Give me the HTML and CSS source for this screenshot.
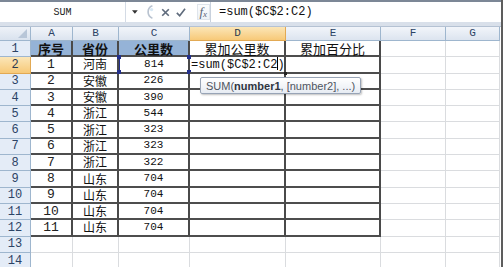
FILE: index.html
```html
<!DOCTYPE html>
<html lang="zh-CN">
<head>
    <meta charset="UTF-8">
    <title>Excel SUM</title>
    <link rel="stylesheet" href="styles.css">
</head>
<body>
    <div class="window">
        <div class="formula-bar">
            <div class="name-box">SUM</div>
            <div class="bar-tools">
                <svg class="drop" width="7" height="4" viewBox="0 0 7 4"><path d="M0 0h7L3.5 4z" fill="#333"/></svg>
                <svg class="knob" width="12" height="18" viewBox="0 0 12 18"><path d="M9 1.5A8 8 0 0 0 9 16.5" fill="none" stroke="#b9c3d0" stroke-width="2"/><circle cx="8" cy="6" r="2" fill="#d8e8f4"/></svg>
                <svg class="tool" width="11" height="11" viewBox="0 0 11 11"><path d="M1.5 1.5l8 8M9.5 1.5l-8 8" stroke="#5f6b7c" stroke-width="2"/></svg>
                <svg class="tool" width="12" height="11" viewBox="0 0 12 11"><path d="M1 6l3.5 3.5L11 1" fill="none" stroke="#5f6b7c" stroke-width="2"/></svg>
                <span class="fx"><i>f</i><i class="x">x</i></span>
            </div>
            <div class="formula-input">=sum($C$2:C2)</div>
        </div>
        <div class="band"></div>
        <div class="sheet" id="sheet"></div>
        <div class="tooltip">SUM(<b>number1</b>, [number2], ...)</div>
    </div>

    <script>
        const cols = ['A', 'B', 'C', 'D', 'E', 'F', 'G'];
        const titles = ['序号', '省份', '公里数', '累加公里数', '累加百分比'];
        const rows = [
            [1, '河南', 814], [2, '安徽', 226], [3, '安徽', 390], [4, '浙江', 544],
            [5, '浙江', 323], [6, '浙江', 323], [7, '浙江', 322], [8, '山东', 704],
            [9, '山东', 704], [10, '山东', 704], [11, '山东', 704]
        ];

        function cell(cls, html) {
            return `<div class="${cls}">${html || ''}</div>`;
        }

        let html = cell('corner', '<span class="tri"></span>');
        cols.forEach(c => {
            html += cell('col-head' + (c === 'D' ? ' active' : ''), c);
        });

        for (let r = 1; r <= 14; r++) {
            html += cell('row-head' + (r === 2 ? ' active' : ''), r);
            cols.forEach((c, i) => {
                const inBox = r <= 12 && i < 5;
                let cls = 'cell' + (inBox ? ' box' : '');
                let text = '';
                if (r === 1 && i < 5) {
                    text = titles[i];
                    cls += i < 3 ? ' title' : ' cjk';
                } else if (r > 1 && r <= 12 && i < 3) {
                    const v = rows[r - 2][i];
                    text = v;
                    cls += i === 0 ? ' num' : i === 1 ? ' cjk small' : ' km';
                }
                if (r === 2 && c === 'C') {
                    cls += ' ref';
                    text += '<span class="mark tl"></span><span class="mark tr"></span><span class="mark bl"></span><span class="mark br"></span>';
                }
                if (r === 2 && c === 'D') {
                    cls += ' editing';
                    text = '<span class="edit-text">=sum($C$2:C2<span class="caret"></span>)</span><span class="handle"></span>';
                }
                html += cell(cls, text);
            });
        }

        document.getElementById('sheet').innerHTML = html;
    </script>
</body>
</html>
```

FILE: styles.css
```css
* {
    box-sizing: border-box;
    margin: 0;
    padding: 0;
}

body {
    width: 503px;
    height: 267px;
    overflow: hidden;
    background: #fff;
    font-family: "Liberation Mono", "Noto Sans CJK SC", monospace;
}

.window {
    position: relative;
    width: 503px;
    height: 267px;
    overflow: hidden;
    border-right: 2px solid #5d5d5d;
}

/* formula bar */
.formula-bar {
    height: 22px;
    display: flex;
    border-top: 2px solid #7c8796;
    background: #fff;
}

.name-box {
    width: 126px;
    display: flex;
    align-items: center;
    justify-content: center;
    font-size: 10px;
    color: #222;
    border-right: 1px solid #d4dbe5;
}

.bar-tools {
    width: 84px;
    display: flex;
    align-items: center;
    padding-left: 6px;
    gap: 5px;
}

.drop {
    margin-right: 2px;
}

.tool {
    margin-left: 1px;
}

.fx {
    margin-left: 6px;
    height: 16px;
    width: 16px;
    display: flex;
    align-items: center;
    justify-content: center;
    border: 1px solid #dfe5ec;
    background: linear-gradient(#fbfcfd, #eef2f6);
    font-family: "Liberation Serif", serif;
    font-size: 13px;
    color: #5a6575;
}

.fx .x {
    font-size: 9px;
    margin-top: 4px;
}

.formula-input {
    flex: 1;
    display: flex;
    align-items: center;
    padding-left: 8px;
    border-left: 1px solid #c8d1dd;
    font-size: 12px;
    color: #111;
}

.band {
    height: 5px;
    background: #d9e0ea;
    border-bottom: 1px solid #b5c2d3;
}

/* sheet grid */
.sheet {
    width: 500px;
    display: grid;
    grid-template-columns: 31px 42px 46px 71px 96px 95px 65px 54px;
    grid-template-rows: 14px;
    grid-auto-rows: 16.3px;
}

.corner,
.col-head,
.row-head {
    display: flex;
    align-items: center;
    justify-content: center;
    line-height: 1;
    color: #2c4365;
    font-size: 11px;
    border-right: 1px solid #9eb6ce;
    border-bottom: 1px solid #9eb6ce;
}

.corner {
    position: relative;
    background: linear-gradient(#eef2f8, #d9e2ee);
}

.corner .tri {
    position: absolute;
    right: 3px;
    bottom: 2px;
    border-left: 9px solid transparent;
    border-bottom: 9px solid #b8c6d8;
}

.col-head {
    background: linear-gradient(#f2f5fa, #dce4ef);
}

.row-head {
    background: #e4ecf7;
    font-size: 12px;
}

.col-head.active,
.row-head.active {
    background: linear-gradient(#fbe6b8, #f7c978);
    border-color: #e2a953;
    color: #2c3a50;
}

.cell {
    position: relative;
    display: flex;
    align-items: center;
    justify-content: center;
    line-height: 1;
    border-right: 1px solid #dadcdf;
    border-bottom: 1px solid #dadcdf;
    color: #111;
}

.cell.box {
    border-right: 2px solid #4a4a4a;
    border-bottom: 2px solid #4d4d4d;
}

.cell.title {
    background: #95b3d7;
    font-family: "Noto Sans CJK SC", sans-serif;
    font-size: 13px;
    font-weight: 700;
}

.cell.cjk {
    font-family: "Noto Sans CJK SC", sans-serif;
    font-size: 13px;
}

.cell.cjk.small {
    font-size: 12px;
}

.cell.num {
    font-size: 13px;
    color: #222;
}

.cell.km {
    font-size: 11px;
}

/* range reference on C2 */
.cell.ref {
    border-left: 1px solid #23308c;
}

.mark {
    position: absolute;
    width: 4px;
    height: 4px;
    background: #23308c;
}

.mark.tl { left: -3px; top: -2px; }
.mark.bl { left: -3px; bottom: -2px; }
.mark.tr { right: -3px; top: -2px; }
.mark.br { right: -3px; bottom: -2px; }

/* cell being edited */
.cell.editing {
    justify-content: flex-start;
    overflow: visible;
    z-index: 1;
}

.edit-text {
    padding-left: 1px;
    font-size: 12px;
    white-space: nowrap;
}

.caret {
    display: inline-block;
    width: 1px;
    height: 13px;
    margin: 0 -1px -2px 0;
    background: #000;
}

.handle {
    position: absolute;
    right: -3px;
    bottom: -3px;
    width: 3px;
    height: 3px;
    background: #222;
}

/* function tooltip */
.tooltip {
    position: absolute;
    left: 200px;
    top: 77px;
    height: 17px;
    padding: 0 5px;
    display: flex;
    align-items: center;
    font-family: "Liberation Sans", Arial, sans-serif;
    font-size: 11px;
    color: #4f5560;
    background: linear-gradient(#ffffff, #e7ecf3);
    border: 1px solid #98a4b6;
    border-radius: 2px;
    box-shadow: 1px 1px 2px rgba(0, 0, 0, 0.25);
    z-index: 2;
}

.tooltip b {
    color: #2f3540;
}
```
